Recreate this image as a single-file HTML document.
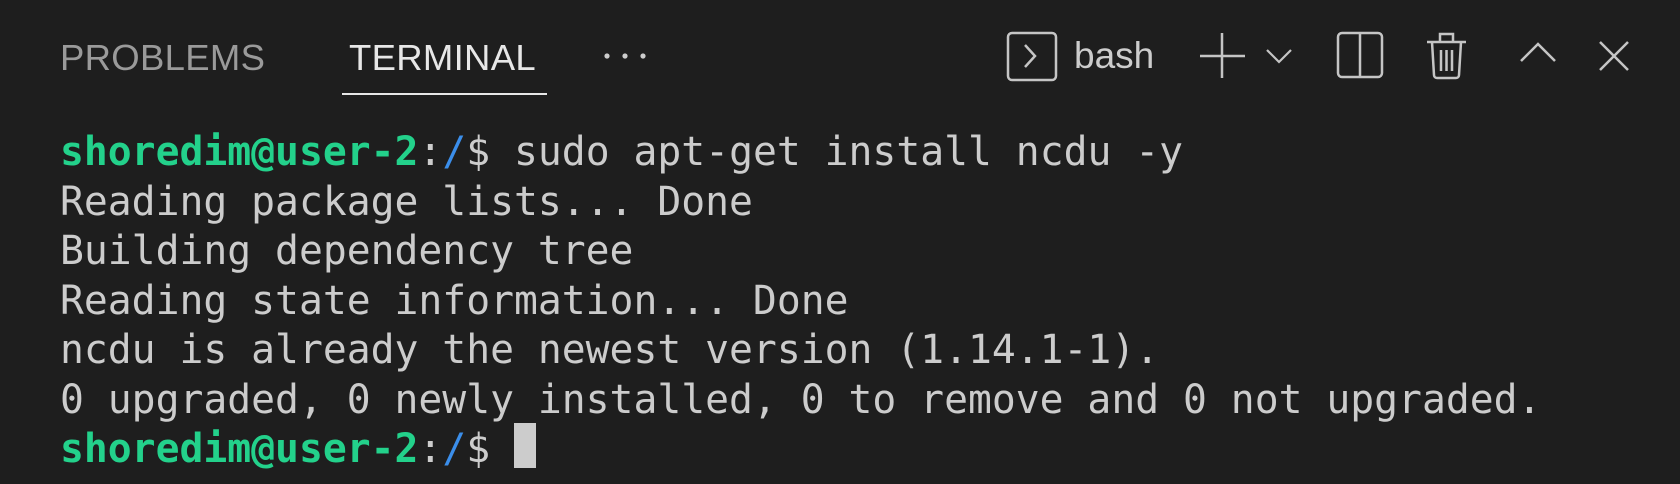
<!DOCTYPE html>
<html><head><style>
html,body{margin:0;padding:0;background:#1e1e1e;width:1680px;height:484px;overflow:hidden}
.tab{position:absolute;top:36px;font-family:"Liberation Sans",sans-serif;font-size:36.5px;line-height:44px;letter-spacing:0.3px}
.term{position:absolute;left:60px;top:128px;font-family:"DejaVu Sans Mono",monospace;font-size:39.7px;line-height:49.5px;color:#cccccc;white-space:pre}
.g{color:#23d18b;font-weight:bold}.b{color:#3b8eea}
svg{position:absolute}
</style></head><body>
<div class="tab" style="left:60px;color:#9a9a9a">PROBLEMS</div>
<div class="tab" style="left:349px;color:#e7e7e7">TERMINAL</div>
<div style="position:absolute;left:342px;top:93px;width:205px;height:2px;background:#e7e7e7"></div>
<svg width="1680" height="110" style="left:0;top:0" fill="none" stroke="#c5c5c5" stroke-width="2.5">
<g fill="#cccccc" stroke="none"><circle cx="607" cy="56" r="2.6"/><circle cx="625" cy="56" r="2.6"/><circle cx="643" cy="56" r="2.6"/></g>
<rect x="1008" y="33" width="48" height="47" rx="4"/>
<path d="M1025 45l10 11-10 11"/>
<path d="M1200 56h45M1222 33v45"/>
<path d="M1267 50l12 12 12-12" stroke-width="2.2"/>
<rect x="1338" y="33" width="44" height="44" rx="4"/>
<path d="M1360 33v44"/>
<path d="M1427 42h39M1440 42v-8h13v8M1432 42l2 33a3 3 0 0 0 3 3h19a3 3 0 0 0 3-3l2-33M1441 50v21M1446.5 50v21M1452 50v21" stroke-width="2.5"/>
<path d="M1521 61l17-17 17 17"/>
<path d="M1600 42l28 28M1628 42l-28 28"/>
</svg>
<div style="position:absolute;left:1074px;top:34px;font-family:'Liberation Sans',sans-serif;font-size:37px;line-height:44px;color:#cccccc">bash</div>
<div class="term"><span class="g">shoredim@user-2</span>:<span class="b">/</span>$ sudo apt-get install ncdu -y
Reading package lists... Done
Building dependency tree
Reading state information... Done
ncdu is already the newest version (1.14.1-1).
0 upgraded, 0 newly installed, 0 to remove and 0 not upgraded.
<span class="g">shoredim@user-2</span>:<span class="b">/</span>$ </div>
<div style="position:absolute;left:514px;top:423px;width:22px;height:45px;background:#cccccc"></div>
</body></html>
